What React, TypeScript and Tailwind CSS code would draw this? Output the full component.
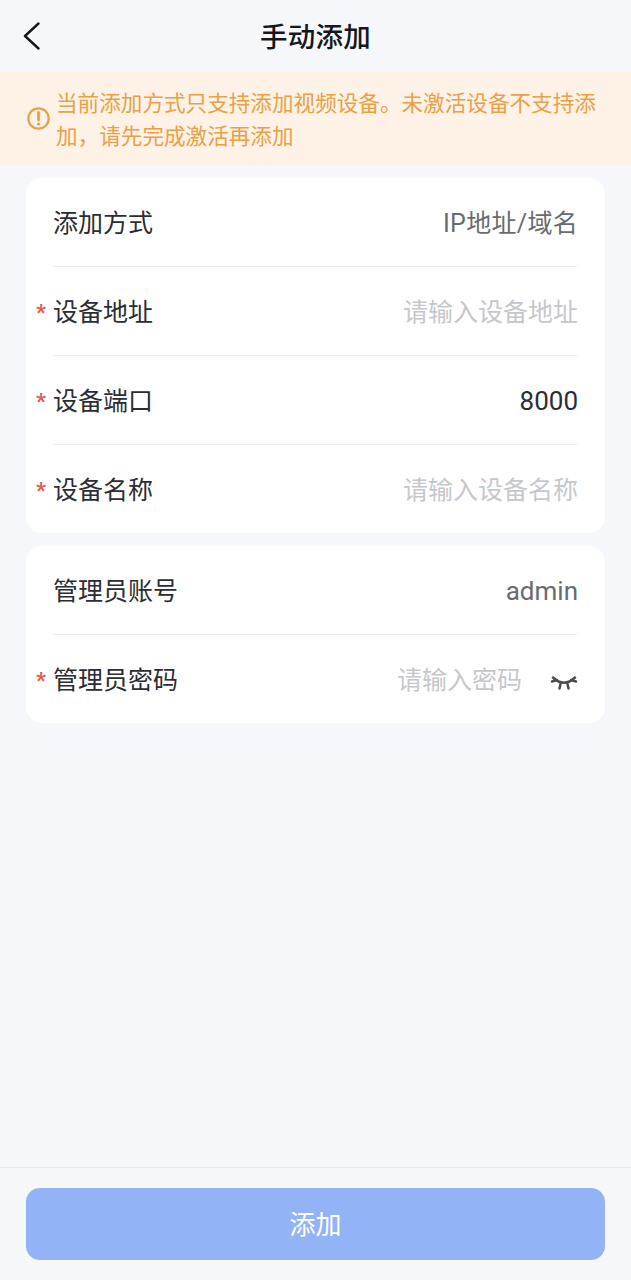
import type { ReactNode } from 'react'

const fontStack = "font-['Roboto','Noto_Sans_CJK_SC',sans-serif]"

interface FormRowProps {
  label: string
  value: ReactNode
  required?: boolean
  last?: boolean
  valueClass?: string
}

function RequiredMark() {
  return (
    <span className="absolute left-[-17px] top-[34px] text-[22px] font-bold leading-[24px] text-[#e8594f]">*</span>
  )
}

function FormRow({ label, value, required, last, valueClass = 'text-[25px] text-[#696b70]' }: FormRowProps) {
  return (
    <div className={`relative mx-[27px] ${last ? 'h-[88px]' : 'h-[89px]'}`}>
      {required && <RequiredMark />}
      <div
        className={`flex h-full items-center justify-between pt-[4px] ${last ? '' : 'border-b border-[#eeeff2]'}`}
      >
        <span className="text-[25px] text-[#2b2d33]">{label}</span>
        <span className={valueClass}>{value}</span>
      </div>
    </div>
  )
}

function BackArrow() {
  return (
    <svg
      width="18"
      height="28"
      viewBox="0 0 18 28"
      fill="none"
      stroke="#15171c"
      strokeWidth="2.4"
      strokeLinecap="round"
      strokeLinejoin="round"
      className="absolute left-[23px] top-[22px]"
    >
      <path d="M15.5 1.5L2 14l13.5 12.5" />
    </svg>
  )
}

function ClosedEye() {
  return (
    <svg
      width="28"
      height="16"
      viewBox="0 0 28 16"
      fill="none"
      stroke="#4a4c52"
      strokeWidth="2.5"
      strokeLinecap="round"
      className="mt-[3px]"
    >
      <path d="M3 2.5Q14 13 25 2.5" />
      <path d="M2 6.5L7 5M26 6.5L21 5M10.5 9L9.5 13.5M17.5 9L18.5 13.5" />
    </svg>
  )
}

function WarningIcon() {
  return (
    <svg width="23" height="23" viewBox="0 0 23 23" fill="none" className="shrink-0">
      <circle cx="11.5" cy="11.5" r="10.2" stroke="#eba045" strokeWidth="2.2" />
      <path d="M11.5 5.5v7.5" stroke="#eba045" strokeWidth="2.8" strokeLinecap="round" />
      <circle cx="11.5" cy="17" r="1.6" fill="#eba045" />
    </svg>
  )
}

export default function App() {
  return (
    <div className={`flex h-[1280px] w-[631px] flex-col bg-[#f5f7fb] ${fontStack}`}>
      <header className="relative flex h-[72px] items-center justify-center pt-[4px]">
        <BackArrow />
        <h1 className="text-[27.5px] font-medium tracking-[0.2px] text-[#15171c]">手动添加</h1>
      </header>

      {/* Notice about supported devices */}
      <div className="flex h-[93px] items-center gap-[6px] bg-[#fef2e6] pl-[27px] pr-[20px]">
        <WarningIcon />
        <p className="pt-[3px] text-[21.6px] leading-[33px] text-[#eba045]">
          当前添加方式只支持添加视频设备。未激活设备不支持添加，请先完成激活再添加
        </p>
      </div>

      <section className="mx-[26px] mt-[13px] rounded-[16px] bg-white">
        <FormRow
          label="添加方式"
          value="IP地址/域名"
          valueClass="text-[25px] tracking-[0.3px] text-[#696b70]"
        />
        <FormRow label="设备地址" value="请输入设备地址" required valueClass="text-[25px] text-[#c6c7cb]" />
        <FormRow label="设备端口" value="8000" required valueClass="-mt-[2px] text-[26px] text-[#2b2d33]" />
        <FormRow label="设备名称" value="请输入设备名称" required last valueClass="text-[25px] text-[#c6c7cb]" />
      </section>

      <section className="mx-[26px] mt-[13px] rounded-[16px] bg-white">
        <FormRow label="管理员账号" value="admin" valueClass="-mt-[2px] text-[26px] text-[#696b70]" />
        <div className="relative mx-[27px] flex h-[88px] items-center justify-between pt-[4px]">
          <RequiredMark />
          <span className="text-[25px] text-[#2b2d33]">管理员密码</span>
          <div className="flex items-center gap-[28px]">
            <span className="text-[25px] text-[#c6c7cb]">请输入密码</span>
            <ClosedEye />
          </div>
        </div>
      </section>

      <footer className="mt-auto h-[113px] border-t border-[#e9ebef] px-[26px] pt-[20px]">
        <button className="flex h-[72px] w-full items-center justify-center rounded-[14px] bg-[#92b4f6] pt-[2px] text-[26px] text-white">
          添加
        </button>
      </footer>
    </div>
  )
}
